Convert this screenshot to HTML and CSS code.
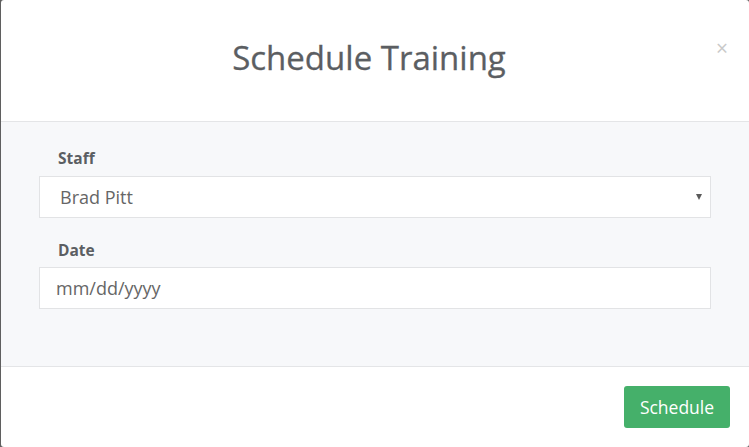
FILE: index.html
```html
<!DOCTYPE html>
<html lang="en">
<head>
<meta charset="utf-8">
<title>Schedule Training</title>
<link rel="stylesheet" href="styles.css">
</head>
<body>
<div class="modal">
  <div class="modal-header">
    <h2 class="modal-title">Schedule Training</h2>
    <button class="close" type="button">×</button>
  </div>
  <div class="modal-body">
    <div class="field">
      <label class="label">Staff</label>
      <div class="select-wrap">
        <select class="control select">
          <option>Brad Pitt</option>
        </select>
      </div>
    </div>
    <div class="field">
      <label class="label">Date</label>
      <input class="control date" type="text" placeholder="mm/dd/yyyy">
    </div>
  </div>
  <div class="modal-footer">
    <button class="btn-schedule" type="button">Schedule</button>
  </div>
</div>
</body>
</html>
```
FILE: styles.css
```css
* { box-sizing: border-box; }
html, body { margin: 0; padding: 0; }
body {
  background: #5f5f5f;
  width: 749px;
  height: 447px;
  overflow: hidden;
  font-family: "Open Sans", "Liberation Sans", sans-serif;
  padding-left: 1px;
}
.modal {
  width: 748px;
  height: 447px;
  background: #fff;
  border-radius: 3px;
  display: flex;
  flex-direction: column;
  overflow: hidden;
}
.modal-header {
  position: relative;
  height: 122px;
  border-bottom: 1px solid #e4e5e7;
  display: flex;
  justify-content: center;
  padding-top: 35px;
  padding-right: 12px;
}
.modal-title {
  margin: 0;
  font-size: 33px;
  font-weight: 400;
  line-height: 46px;
  color: #5b5e62;
  -webkit-text-stroke: 0.3px #5b5e62;
}
.close {
  position: absolute;
  top: 36px;
  right: 21px;
  background: none;
  border: 0;
  padding: 0;
  font-family: "Open Sans", sans-serif;
  font-size: 21px;
  line-height: 24px;
  color: #c9c9c9;
}
.modal-body {
  flex: 1;
  background: #f7f8fa;
  padding: 25px 38px 0 38px;
  border-bottom: 1px solid #e4e5e7;
}
.field { display: flex; flex-direction: column; }
.field + .field { margin-top: 21px; }
.label {
  font-size: 15.5px;
  font-weight: 700;
  line-height: 22px;
  color: #5b5e62;
  padding-left: 19px;
  margin-bottom: 7px;
}
.field + .field .label { margin-bottom: 6px; }
.select-wrap { position: relative; }
.select-wrap::after {
  content: "";
  position: absolute;
  right: 9px;
  top: 18px;
  border-left: 3.5px solid transparent;
  border-right: 3.5px solid transparent;
  border-top: 6px solid #5a5a5a;
}
.control {
  display: block;
  width: 100%;
  height: 42px;
  border: 1px solid #e2e3e5;
  border-radius: 0;
  background: #fff;
  font-family: "Open Sans", sans-serif;
  font-size: 18px;
  color: #666;
  outline: none;
  margin: 0;
}
.select {
  -webkit-appearance: none;
  appearance: none;
  padding: 0 0 0 20px;
}
.date { padding: 0 0 0 16px; }
.date::placeholder { color: #666; opacity: 1; }
.modal-footer {
  height: 80px;
  display: flex;
  justify-content: flex-end;
  align-items: flex-start;
  padding: 19px 19px 0 0;
}
.btn-schedule {
  width: 106px;
  height: 42px;
  background: #45b06a;
  border: 0;
  border-radius: 3px;
  color: #fff;
  font-family: "Open Sans", sans-serif;
  font-size: 17.5px;
  padding: 0;
}
```
